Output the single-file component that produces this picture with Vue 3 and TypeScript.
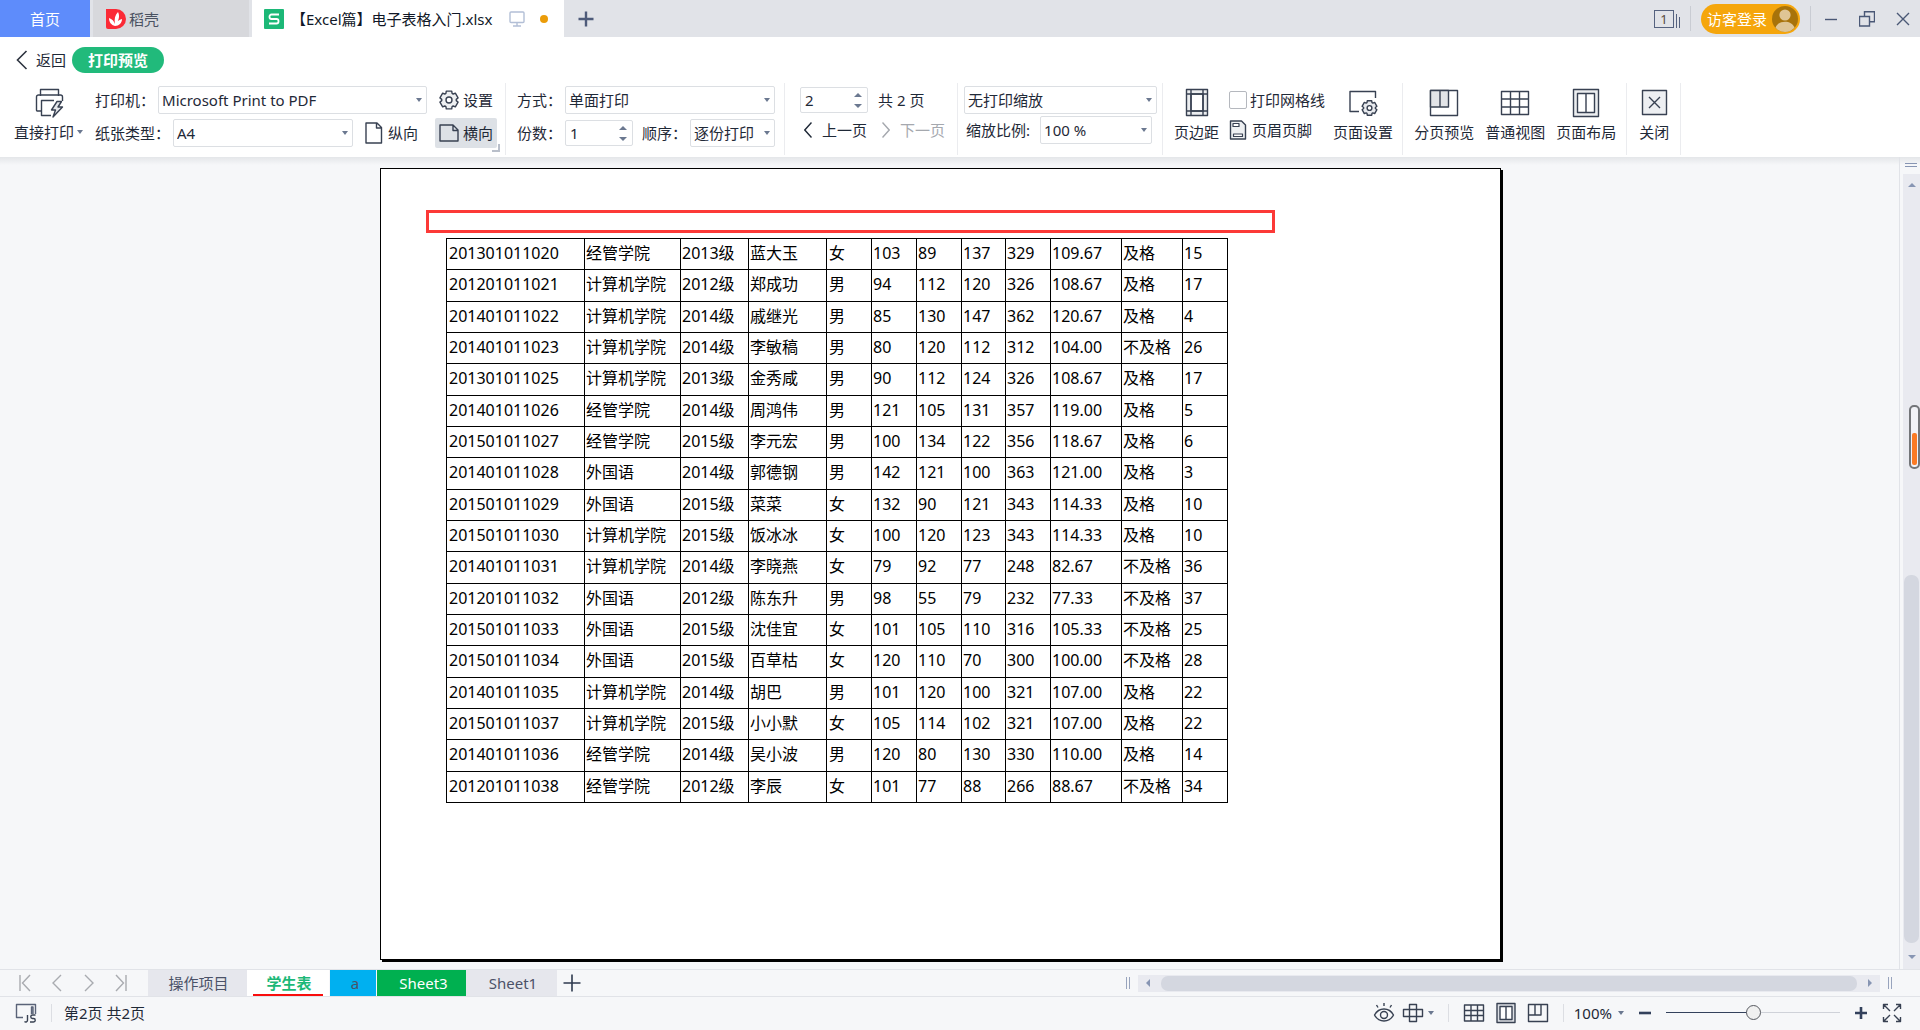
<script setup lang="ts">
import { ref } from 'vue'

type Row = [string, string, string, string, string, number, number, number, number, string, string, number]

const rows: Row[] = [
  ['201301011020', '经管学院', '2013级', '蓝大玉', '女', 103, 89, 137, 329, '109.67', '及格', 15],
  ['201201011021', '计算机学院', '2012级', '郑成功', '男', 94, 112, 120, 326, '108.67', '及格', 17],
  ['201401011022', '计算机学院', '2014级', '戚继光', '男', 85, 130, 147, 362, '120.67', '及格', 4],
  ['201401011023', '计算机学院', '2014级', '李敏稿', '男', 80, 120, 112, 312, '104.00', '不及格', 26],
  ['201301011025', '计算机学院', '2013级', '金秀咸', '男', 90, 112, 124, 326, '108.67', '及格', 17],
  ['201401011026', '经管学院', '2014级', '周鸿伟', '男', 121, 105, 131, 357, '119.00', '及格', 5],
  ['201501011027', '经管学院', '2015级', '李元宏', '男', 100, 134, 122, 356, '118.67', '及格', 6],
  ['201401011028', '外国语', '2014级', '郭德钢', '男', 142, 121, 100, 363, '121.00', '及格', 3],
  ['201501011029', '外国语', '2015级', '菜菜', '女', 132, 90, 121, 343, '114.33', '及格', 10],
  ['201501011030', '计算机学院', '2015级', '饭冰冰', '女', 100, 120, 123, 343, '114.33', '及格', 10],
  ['201401011031', '计算机学院', '2014级', '李晓燕', '女', 79, 92, 77, 248, '82.67', '不及格', 36],
  ['201201011032', '外国语', '2012级', '陈东升', '男', 98, 55, 79, 232, '77.33', '不及格', 37],
  ['201501011033', '外国语', '2015级', '沈佳宜', '女', 101, 105, 110, 316, '105.33', '不及格', 25],
  ['201501011034', '外国语', '2015级', '百草枯', '女', 120, 110, 70, 300, '100.00', '不及格', 28],
  ['201401011035', '计算机学院', '2014级', '胡巴', '男', 101, 120, 100, 321, '107.00', '及格', 22],
  ['201501011037', '计算机学院', '2015级', '小小默', '女', 105, 114, 102, 321, '107.00', '及格', 22],
  ['201401011036', '经管学院', '2014级', '吴小波', '男', 120, 80, 130, 330, '110.00', '及格', 14],
  ['201201011038', '经管学院', '2012级', '李辰', '女', 101, 77, 88, 266, '88.67', '不及格', 34],
]
const columns = [138, 96, 68, 78, 45, 45, 45, 44, 45, 71, 61, 45]

const copies = ref(1)
const page = ref(2)
const gridlines = ref(false)
const zoom = ref(50)

// Outline of a six-toothed cog around (c, c)
function cog(c: number, outer: number, inner: number): string {
  const pts: string[] = []
  const at = (deg: number, r: number) => {
    const a = (deg * Math.PI) / 180
    pts.push(`${(c + r * Math.cos(a)).toFixed(2)} ${(c + r * Math.sin(a)).toFixed(2)}`)
  }
  for (let i = 0; i < 6; i++) {
    const d = i * 60 - 90
    at(d - 17, outer)
    at(d + 17, outer)
    at(d + 25, inner)
    at(d + 35, inner)
  }
  return `M${pts.join('L')}Z`
}
</script>

<template>
  <div class="app">
    <header class="titlebar">
      <button class="tab home">首页</button>
      <button class="tab docer">
        <svg width="20" height="20" viewBox="0 0 20 20"><path d="M0 0h10a10 10 0 0 1 0 20H2a2 2 0 0 1-2-2z" fill="#fb2a36" /><path d="M9 17C5 16 3 13 3 9c3 1 5 3 6 6C8 10 9 6 12 3c2 4 1 8-2 12 1-3 3-4 6-5 0 4-3 7-7 7z" fill="#fff" /></svg>
        <span>稻壳</span>
      </button>
      <div class="tab file">
        <svg width="20" height="20" viewBox="0 0 20 20"><rect width="20" height="20" rx="1" fill="#1cb877" /><path d="M15 5.5H7.5a2 2 0 0 0-2 2v.5a2 2 0 0 0 2 2h5a2 2 0 0 1 2 2v.5a2 2 0 0 1-2 2H5" fill="none" stroke="#fff" stroke-width="1.8" /></svg>
        <span class="filename">【Excel篇】电子表格入门.xlsx</span>
        <svg class="monitor" width="16" height="16" viewBox="0 0 16 16" fill="none" stroke="#b3bfd6" stroke-width="1.4"><rect x="1" y="1" width="14" height="10.5" rx="1" /><path d="M8 11.5V15M4 15h8" /></svg>
        <i class="dot"></i>
      </div>
      <button class="newtab" aria-label="新建"><svg width="16" height="16" viewBox="0 0 16 16" stroke="#4e5b7a" stroke-width="2.4"><path d="M8 .5v15M.5 8h15" /></svg></button>
      <div class="window-tools">
        <button class="count" aria-label="窗口"><span>1</span><i></i><i></i></button>
        <span class="bar"></span>
        <button class="login">访客登录
          <svg width="26" height="26" viewBox="0 0 26 26"><circle cx="13" cy="13" r="13" fill="#a8730a" /><circle cx="13" cy="9" r="5.6" fill="#dfc595" /><path d="M3.5 21.8C5 17.5 9 15.8 13 15.8s8 1.7 9.5 6A13 13 0 0 1 13 26a13 13 0 0 1-9.5-4.200z" fill="#dfc595" /></svg>
        </button>
        <span class="bar"></span>
        <div class="sysbtns">
          <button aria-label="最小化"><svg width="16" height="16" viewBox="0 0 16 16"><path d="M2 8.500h12" /></svg></button>
          <button aria-label="还原"><svg width="16" height="16" viewBox="0 0 16 16"><path d="M.5 5.500h10v9.500H.5zM5.500 5.500V.8h10v10h-5" /></svg></button>
          <button aria-label="关闭窗口"><svg width="16" height="16" viewBox="0 0 16 16"><path d="M2 2l12 12M14 2L2 14" /></svg></button>
        </div>
      </div>
    </header>

    <nav class="navrow">
      <button class="back"><svg width="12" height="20" viewBox="0 0 12 20" fill="none" stroke="#2e3440" stroke-width="1.600"><path d="M10.500 1L1.500 10l9 9" /></svg>返回</button>
      <span class="pill">打印预览</span>
    </nav>

    <section class="ribbon">
      <div class="group g-printer">
        <button class="big">
          <svg width="32" height="32" viewBox="0 0 32 32" class="ico"><path d="M7.500 10V3.500h18V10M8 25H4.500a1 1 0 0 1-1-1V11a2 2 0 0 1 2-2h22a2 2 0 0 1 2 2v4M18 29.500H8.500v-15H21" /><path d="M24 15.500l-5.500 8.500h4L20 31l9.500-10h-4.500l3.500-5.500z" fill="#e4e6ea" /></svg>
          <span>直接打印<i class="caret"></i></span>
        </button>
        <div class="rows wide">
          <div class="row">
            <label for="printer">打印机：</label>
            <span class="drop grow"><select id="printer"><option>Microsoft Print to PDF</option></select></span>
            <button class="inline boxed"><svg width="20" height="20" viewBox="0 0 20 20" class="ico"><path :d="cog(10, 9.3, 7.3)" fill="#eef0f2" /><circle cx="10" cy="10" r="3" fill="#fff" /></svg>设置</button>
          </div>
          <div class="row">
            <label for="paper">纸张类型：</label>
            <span class="drop w180"><select id="paper"><option>A4</option></select></span>
            <button class="inline portrait"><svg width="18" height="22" viewBox="0 0 18 22" class="ico"><path d="M1 1h11l4.500 4.500V21H1zM11.500 1v5h5" /></svg>纵向</button>
            <button class="inline boxed on"><svg width="20" height="20" viewBox="0 0 20 20" class="ico"><path d="M1 2h13l5 5v11H1zM14 2v5.500h5" /></svg>横向</button>
          </div>
        </div>
      </div>

      <div class="group g-mode">
        <div class="rows wide">
          <div class="row">
            <label for="mode">方式：</label>
            <span class="drop w210"><select id="mode"><option>单面打印</option></select></span>
          </div>
          <div class="row">
            <label for="copies">份数：</label>
            <span class="spin"><input id="copies" v-model="copies" type="number" min="1" /><button class="up" aria-label="增加"></button><button class="down" aria-label="减少"></button></span>
            <label for="order" class="order">顺序：</label>
            <span class="drop w85"><select id="order"><option>逐份打印</option></select></span>
          </div>
        </div>
      </div>

      <div class="group g-page">
        <div class="rows">
          <div class="row">
            <span class="spin"><input id="page" v-model="page" type="number" min="1" max="2" aria-label="页码" /><button class="up" aria-label="后一页"></button><button class="down" aria-label="前一页"></button></span>
            <label for="page" class="total">共 2 页</label>
          </div>
          <div class="row pager">
            <button><svg width="8" height="16" viewBox="0 0 8 16"><path d="M7.500 .5L.8 8l6.700 7.500" /></svg>上一页</button>
            <button disabled><svg width="8" height="16" viewBox="0 0 8 16"><path d="M.5 .5L7.200 8 .5 15.500" /></svg>下一页</button>
          </div>
        </div>
      </div>

      <div class="group g-scale">
        <div class="rows">
          <div class="row"><span class="drop w193"><select aria-label="打印缩放"><option>无打印缩放</option></select></span></div>
          <div class="row">
            <label for="scale" class="scale">缩放比例:</label>
            <span class="drop w112"><select id="scale"><option>100 %</option></select></span>
          </div>
        </div>
      </div>

      <div class="group g-layout">
        <button class="big"><svg width="32" height="32" viewBox="0 0 32 32" class="ico"><path d="M5.500 3.500h21v26h-21z" fill="#eceef0" /><path d="M10 8h12v17H10z" fill="#fff" /><path d="M10 3.500v26M22 3.500v26M5.500 8h21M5.500 25h21" /></svg><span>页边距</span></button>
        <div class="rows">
          <label class="row check"><input v-model="gridlines" type="checkbox" />打印网格线</label>
          <button class="inline"><svg width="18" height="20" viewBox="0 0 18 20" class="ico"><path d="M1.500 1h11l4 4v14h-15z" fill="#eef0f2" /><path d="M4 3.500h6v3H4zM4.500 14h9v2.500h-9z" fill="#fff" stroke-width="1.200" /></svg>页眉页脚</button>
        </div>
        <button class="big"><svg width="32" height="32" viewBox="0 0 32 32" class="ico"><path d="M12 25.500H3v-20h25.500V12" /><g transform="translate(14.500 14)"><path :d="cog(8, 7.6, 5.9)" fill="#e8eaee" /><circle cx="8" cy="8" r="2.400" fill="#fff" /></g></svg><span>页面设置</span></button>
      </div>

      <div class="group g-views">
        <button class="big"><svg width="32" height="32" viewBox="0 0 32 32" class="ico"><path d="M2.500 4.500h27v25h-27z" /><path d="M2.500 4.500h9.500v16.500H2.500zM12 4.500h8.500V21H12z" fill="#e2e4e7" /></svg><span>分页预览</span></button>
        <button class="big"><svg width="32" height="32" viewBox="0 0 32 32" class="ico"><path d="M2.500 5.500h27v23h-27zM11.500 5.500v23M20.500 5.500v23M2.500 13h27M2.500 21h27" /></svg><span>普通视图</span></button>
        <button class="big"><svg width="32" height="32" viewBox="0 0 32 32" class="ico"><path d="M3.500 3.500h25v27h-25z" fill="#eceef0" /><path d="M7.500 7.500h17v19h-17zM16 7.500v19" fill="#fff" /></svg><span>页面布局</span></button>
      </div>

      <div class="group g-close">
        <button class="big"><svg width="32" height="32" viewBox="0 0 32 32" class="ico"><path d="M4.500 4.500h24v24h-24z" fill="#edeff2" /><path d="M11 11l11 11M22 11L11 22" /></svg><span>关闭</span></button>
      </div>
    </section>

    <div class="workspace">
      <main class="canvas">
        <article class="paper">
          <div class="highlight"></div>
          <table class="sheet">
            <colgroup><col v-for="(w, i) in columns" :key="i" :style="{ width: w + 'px' }" /></colgroup>
            <tbody>
              <tr v-for="r in rows" :key="r[0]"><td v-for="(c, i) in r" :key="i">{{ c }}</td></tr>
            </tbody>
          </table>
        </article>
      </main>
      <aside class="vscroll">
        <i class="split"></i>
        <div class="track">
          <i class="tri t-up"></i>
          <i class="thumb"></i>
          <i class="tri t-down"></i>
        </div>
      </aside>
      <div class="gauge"><i></i></div>
    </div>

    <footer>
      <div class="sheetbar">
        <div class="jump">
          <button aria-label="第一张"><svg width="16" height="18" viewBox="0 0 16 18"><path d="M3 1v16M13 1L5.500 9l7.500 8" /></svg></button>
          <button aria-label="上一张"><svg width="16" height="18" viewBox="0 0 16 18"><path d="M12 1L4 9l8 8" /></svg></button>
          <button aria-label="下一张"><svg width="16" height="18" viewBox="0 0 16 18"><path d="M4 1l8 8-8 8" /></svg></button>
          <button aria-label="最后一张"><svg width="16" height="18" viewBox="0 0 16 18"><path d="M13 1v16M3 1l7.500 8L3 17" /></svg></button>
        </div>
        <button class="st s1">操作项目</button>
        <button class="st s2">学生表</button>
        <button class="st s3">a</button>
        <button class="st s4">Sheet3</button>
        <button class="st s5">Sheet1</button>
        <button class="add" aria-label="新建工作表"><svg width="18" height="18" viewBox="0 0 18 18" stroke="#2f3a4f" stroke-width="1.600"><path d="M9 .5v17M.5 9h17" /></svg></button>
        <div class="hscroll">
          <i class="grip"></i>
          <div class="htrack"><i class="tri t-left"></i><i class="hthumb"></i><i class="tri t-right"></i></div>
          <i class="grip"></i>
        </div>
      </div>
      <div class="status">
        <button class="js" aria-label="宏"><svg width="22" height="20" viewBox="0 0 22 20" class="ico"><path d="M8 14.500H1.500V1.500h19V11M16.500 11V4h1.500v7" stroke="#5a6378" /><path d="M12.500 12v5a1.800 1.800 0 0 1-3 1.500M20.500 12h-3a1.500 1.500 0 0 0 0 3.500h1a1.600 1.600 0 0 1 0 3.500H15" /></svg></button>
        <span class="vbar"></span>
        <span class="pages">第2页 共2页</span>
        <div class="right">
          <button aria-label="护眼模式"><svg width="22" height="22" viewBox="0 0 22 22" class="ico"><path d="M1.500 13C4 8.500 7 7 11 7s7 1.500 9.500 6c-2.500 4.500-5.500 6-9.500 6s-7-1.500-9.500-6zM11 1v3M3.500 3L5 5.500M18.500 3L17 5.500" /><circle cx="11" cy="13" r="3.500" /></svg></button>
          <button class="cross" aria-label="阅读模式"><svg width="22" height="22" viewBox="0 0 22 22" class="ico"><path d="M7.500 2.500h7v17h-7zM1.500 7.500h19v7h-19z" /></svg><i class="caret"></i></button>
          <span class="vbar"></span>
          <button aria-label="普通视图"><svg width="22" height="22" viewBox="0 0 22 22" class="ico"><path d="M1.500 3h19v16h-19zM8 3v16M14.500 3v16M1.500 8.500h19M1.500 13.500h19" /></svg></button>
          <button aria-label="页面布局"><svg width="22" height="22" viewBox="0 0 22 22" class="ico"><path d="M2 1.500h18v19H2z" fill="#dcdfe5" /><path d="M5 4.500h12v13H5zM11 4.500v13" fill="#fff" /></svg></button>
          <button aria-label="分页预览"><svg width="22" height="22" viewBox="0 0 22 22" class="ico"><path d="M1.500 2.500h19v17h-19zM1.500 13h12.500V2.500M8 2.500V13" /></svg></button>
          <span class="vbar"></span>
          <button class="pct">100%<i class="caret"></i></button>
          <button class="sign" aria-label="缩小"><svg width="14" height="14" viewBox="0 0 14 14"><path d="M1 7h12" /></svg></button>
          <input v-model="zoom" class="zoom" type="range" min="0" max="100" aria-label="显示比例" />
          <button class="sign" aria-label="放大"><svg width="14" height="14" viewBox="0 0 14 14"><path d="M1 7h12M7 1v12" /></svg></button>
          <button class="full" aria-label="全屏"><svg width="20" height="20" viewBox="0 0 20 20" class="ico"><path d="M8 8L1.500 1.500M1.500 6V1.500H6M12 8l6.500-6.500M14 1.500h4.500V6M8 12l-6.500 6.500M1.500 14v4.500H6M12 12l6.500 6.500M14 18.500h4.500V14" /></svg></button>
        </div>
      </div>
    </footer>
  </div>
</template>

<style>
body { margin: 0; }
</style>

<style scoped>
* { box-sizing: border-box; }
.app { min-height: 100vh; display: flex; flex-direction: column; background: #f6f7f9; color: #1f2937; font: 15px/20px "Noto Sans", "Noto Sans CJK SC", sans-serif; white-space: nowrap; }
button, input, select { font: inherit; color: inherit; margin: 0; }
button { border: 0; background: none; padding: 0; }
button, select { cursor: pointer; }
svg { display: block; flex: none; }
i { display: block; }
.ico { fill: none; stroke: #384152; stroke-width: 1.4; stroke-linejoin: round; }

.titlebar { height: 37px; display: flex; background: #e1e3e8; }
.tab { display: flex; align-items: center; }
.home { width: 90px; justify-content: center; background: #5e8cfb; color: #fff; }
.docer { width: 156px; margin: 0 3px; padding-left: 13px; gap: 3px; background: #d7d8dc; color: #4a5261; }
.file { width: 312px; padding: 0 16px 0 12px; gap: 7px; background: #fff; color: #111827; }
.monitor { margin-left: auto; }
.dot { width: 8px; height: 8px; margin-left: 8px; border-radius: 50%; background: #eb9c09; }
.newtab { margin-left: 14px; }
.window-tools { margin-left: auto; display: flex; align-items: center; gap: 10px; padding-right: 9px; }
.count { display: flex; gap: 2px; align-items: flex-end; color: #5a4a3c; font-size: 13px; line-height: 16px; }
.count span { width: 20px; border: 1px solid #55627f; height: 18px; }
.count i { width: 1px; height: 14px; background: #55627f; }
.count i + i { height: 11px; }
.bar { width: 1px; height: 25px; background: #c9ccd3; }
.login { height: 30px; display: flex; align-items: center; gap: 5px; padding: 0 2px 0 6px; border-radius: 15px; background: #f5a60c; color: #fff; }
.sysbtns { display: flex; gap: 20px; padding-left: 2px; }
.sysbtns svg { fill: none; stroke: #4a5876; stroke-width: 1.4; }

.navrow { height: 46px; display: flex; align-items: center; gap: 6px; padding: 0 0 0 16px; background: #fff; }
.back { display: flex; align-items: center; gap: 8px; }
.pill { height: 26px; line-height: 26px; padding: 0 16px; border-radius: 13px; background: #21ba7b; color: #fff; font-weight: 600; }

.ribbon { display: flex; height: 74px; padding-bottom: 2px; background: #fff; }
.group { display: flex; border-right: 1px solid #ebecef; }
.rows { display: flex; flex-direction: column; padding-top: 2px; }
.rows.wide { gap: 3px; }
.row { height: 30px; display: flex; align-items: center; }
.row > label { padding-right: 3px; }
.big { display: flex; flex-direction: column; align-items: center; padding-top: 3px; }
.big span { display: flex; align-items: center; gap: 3px; line-height: 28px; }
.caret { width: 0; height: 0; border: 3px solid transparent; border-top: 4px solid #6b7890; border-bottom: 0; }
.g-printer { padding: 0 8px 0 14px; gap: 12px; }
.g-mode { padding: 0 9px 0 11px; }
.g-page { padding: 0 12px 0 15px; }
.g-scale { padding: 0 5px 0 6px; }
.g-layout { padding: 0 9px 0 11px; gap: 10px; }
.g-layout .rows { margin-right: -2px; }
.g-views, .g-close { padding: 0 10px 0 11px; gap: 11px; }
.g-printer .rows { width: 402px; }
.drop { position: relative; height: 28px; }
.drop::after { content: ""; position: absolute; right: 5px; top: 12px; border: 3px solid transparent; border-top: 4px solid #6b7890; border-bottom: 0; pointer-events: none; }
.drop select { appearance: none; width: 100%; height: 28px; padding: 0 14px 0 3px; border: 1px solid #dcdfe3; border-radius: 2px; background: #fff; outline: 0; }
.grow { flex: 1; }
.w180 { width: 180px; }
.w210 { width: 210px; }
.w193 { width: 193px; }
.w112 { width: 112px; }
.w85 { width: 85px; }
.spin { position: relative; width: 68px; height: 26px; }
.spin input { appearance: textfield; width: 68px; height: 26px; padding: 0 20px 0 4px; border: 1px solid #dcdfe3; border-radius: 2px; background: #fff; outline: 0; }
.spin input::-webkit-inner-spin-button { appearance: none; margin: 0; }
.spin button { position: absolute; right: 6px; width: 8px; height: 4px; border: 4px solid transparent; }
.spin .up { top: 6px; border-top: 0; border-bottom-color: #6b7890; }
.spin .down { bottom: 5px; border-bottom: 0; border-top-color: #6b7890; }
.row .order { margin-left: 9px; }
.row .total { margin-left: 10px; }
.row .scale { width: 76px; padding-left: 2px; }
.inline { height: 30px; display: flex; align-items: center; gap: 5px; }
.boxed { margin-left: 8px; padding: 0 4px; gap: 4px; width: 62px; }
.portrait { margin-left: 12px; }
.row .on { position: relative; margin-left: auto; background: #dde1e6; border-radius: 2px; }
.on::after { content: ""; position: absolute; right: -3px; bottom: -4px; width: 6px; height: 6px; border: solid #b9bfca; border-width: 0 2px 2px 0; }
.pager { padding-left: 4px; gap: 15px; }
.pager button { display: flex; align-items: center; gap: 10px; }
.pager svg { fill: none; stroke: currentColor; stroke-width: 1.4; }
.pager button:disabled { color: #a5a8ae; cursor: default; }
.check { gap: 3px; }
.check input { appearance: none; width: 18px; height: 18px; border: 1px solid #b5b8be; border-radius: 2px; background: #fff; }

.workspace { position: relative; flex: 1; display: flex; background: linear-gradient(#e4e6e9, #f6f7f9 8px); }
.canvas { flex: 1; display: flex; justify-content: center; padding: 11px 18px 9px 0; }
.paper { width: 1121px; padding: 41px 0 20px 45px; background: #fff; border: 1px solid #000; box-shadow: 2px 2px 0 #000; }
.highlight { width: 849px; max-width: 100%; height: 23px; border: 3px solid #fc3937; }
.sheet { table-layout: fixed; width: 782px; height: 565px; margin: 5px 0 0 20px; border-collapse: separate; border-spacing: 0; border: solid #000; border-width: 1px 0 0 1px; color: #000; font-size: 16px; line-height: 22px; }
.sheet td { padding: 0 0 2px 1px; border: solid #000; border-width: 0 1px 1px 0; }
.sheet td:first-child, .sheet td:nth-child(5) { padding-left: 2px; }
.vscroll { width: 21px; display: flex; flex-direction: column; align-items: flex-end; border-left: 1px solid #e1e3e8; }
.split { width: 12px; height: 4px; margin: 6px 3px 7px 0; border: solid #8795b3; border-width: 1px 0; }
.track { flex: 1; width: 17px; display: flex; flex-direction: column; align-items: center; background: #e9eaf0; }
.tri { width: 0; height: 0; border: 4px solid transparent; }
.t-up { margin-top: 9px; border-top: 0; border-bottom-color: #8795b3; }
.t-down { margin: 12px 0 10px; border-bottom: 0; border-top-color: #8795b3; }
.thumb { width: 15px; height: 368px; margin-top: auto; border-radius: 7px; background: #d4d7e0; }
.gauge { position: absolute; right: 0; top: 248px; width: 11px; height: 64px; padding: 2px 1px; border: 2px solid #737579; border-radius: 5px; background: #f1f2f7; display: flex; align-items: flex-end; }
.gauge i { width: 5px; height: 32px; border-radius: 2px; background: #fb7a24; }

.sheetbar { height: 28px; display: flex; border: solid #e1e3e8; border-width: 1px 0; }
.jump { width: 148px; display: flex; align-items: center; gap: 16px; padding-left: 17px; }
.jump svg { fill: none; stroke: #a9abb0; stroke-width: 1.4; }
.st { height: 26px; background: #e6e7ed; color: #4b5268; }
.s1 { width: 99px; padding-left: 2px; }
.s2 { position: relative; width: 82px; margin-right: 1px; padding-left: 2px; background: #fff; color: #1cb877; font-weight: 600; }
.s2::after { content: ""; position: absolute; left: 6px; right: 6px; bottom: 0; height: 2px; background: #f90d0d; }
.s3 { width: 46px; margin-right: 1px; background: #00b0f0; padding-left: 4px; }
.s4 { width: 89px; background: #00b050; color: #fff; padding-left: 4px; }
.s5 { width: 91px; padding-left: 3px; }
.add { margin-left: 6px; }
.hscroll { flex: 0 1 766px; margin: 0 28px 0 auto; display: flex; align-items: center; gap: 8px; }
.grip { width: 4px; height: 12px; border: solid #98a4bd; border-width: 0 1px; }
.htrack { flex: 1; height: 17px; display: flex; align-items: center; justify-content: space-between; padding: 0 8px; background: #e9eaf0; }
.hthumb { flex: 1; height: 15px; margin: 0 11px; border-radius: 7px; background: #d4d7e0; }
.t-left { border-left: 0; border-right-color: #8795b3; }
.t-right { border-right: 0; border-left-color: #8795b3; }
.status { height: 33px; display: flex; align-items: center; padding: 0 18px 2px 15px; }
.vbar { width: 1px; height: 18px; background: #dcdee3; }
.js { margin-right: 14px; }
.pages { margin-left: 12px; }
.right { margin-left: auto; display: flex; align-items: center; }
.right .cross { display: flex; align-items: center; gap: 4px; margin: 0 14px 0 7px; }
.right .vbar { margin-right: 14px; }
.right button + button { margin-left: 10px; }
.right button + .cross { margin-left: 7px; }
.right button + .vbar { margin-left: 14px; }
.right .cross + .vbar { margin-left: 0; }
.right .pct { display: flex; align-items: center; gap: 6px; margin-left: -4px; }
.right .pct + .sign { margin-left: 14px; }
.sign svg { stroke: #33415c; stroke-width: 2.6; }
.zoom { appearance: none; width: 174px; height: 16px; margin: 0 14px; background: linear-gradient(90deg, #33415c 50%, #cfd2d9 50%) center / 100% 1px no-repeat; outline: 0; }
.zoom::-webkit-slider-thumb { appearance: none; width: 15px; height: 15px; border: 1px solid #55585f; border-radius: 50%; background: #f0f0f0; }
.right button.full { margin-left: 14px; }
</style>
